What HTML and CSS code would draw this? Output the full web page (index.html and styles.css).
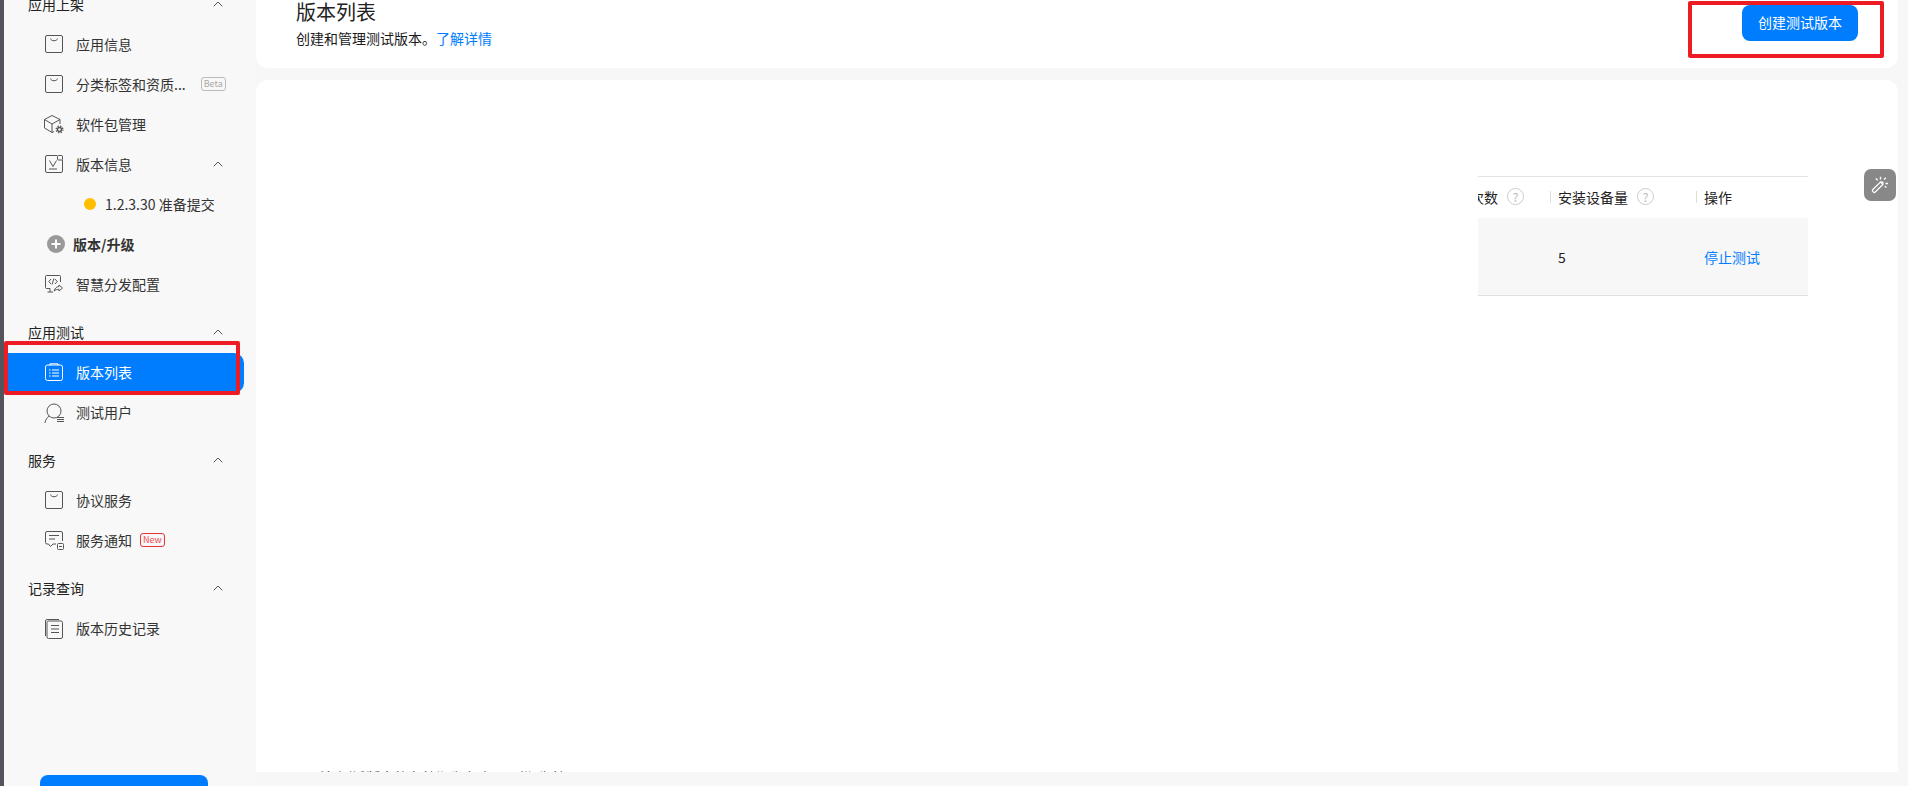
FILE: index.html
```html
<!DOCTYPE html>
<html>

<head>
    <title>版本列表</title>
    <meta charset="utf-8" />
    <link rel="stylesheet" href="styles.css">
</head>

<body>
    <svg class="defs" width="0" height="0">
        <symbol id="ic-box" viewBox="0 0 18 18">
            <rect x="0.5" y="0.5" width="17" height="17" rx="1.500" fill="none" stroke="#555" />
            <path d="M5.500 3.500c.5 3 6.500 3 7 0" fill="none" stroke="#555" />
        </symbol>
        <symbol id="ic-up" viewBox="0 0 10 6">
            <path d="M.7 5.300 5 1l4.300 4.300" fill="none" stroke="#555" />
        </symbol>
    </svg>
    <div class="page">
        <div class="edge"></div>
        <div class="side">
            <div class="group-title first">应用上架<svg class="up"><use href="#ic-up" /></svg></div>
            <div class="item">
                <svg class="icon"><use href="#ic-box" /></svg>
                <span>应用信息</span>
            </div>
            <div class="item">
                <svg class="icon"><use href="#ic-box" /></svg>
                <span>分类标签和资质...</span>
                <span class="tag tag-beta">Beta</span>
            </div>
            <div class="item">
                <svg class="icon" viewBox="0 0 18 18" fill="none" stroke="#555">
                    <path d="M7 .5 15 4.500V9M7 .5-.5 4.500V13L7 17.500l2-1M-.5 4.500 7 9l8-4.500M7 9v8.500" />
                    <circle cx="14.500" cy="14.500" r="2" stroke-width="1.400" />
                    <circle cx="14.500" cy="14.500" r="3.400" stroke-dasharray="1.400 1.300" stroke-width="1.200" />
                </svg>
                <span>软件包管理</span>
            </div>
            <div class="item">
                <svg class="icon" viewBox="0 0 18 18" fill="none" stroke="#555">
                    <path d="M12 .5H2A1.500 1.500 0 0 0 .5 2v14A1.500 1.500 0 0 0 2 17.500h14a1.500 1.500 0 0 0 1.500-1.500V5" />
                    <rect x="12.500" y=".5" width="5" height="4.500" rx=".8" />
                    <path d="M4.500 5.500 8 11.500l3.500-6M4 14h8" />
                </svg>
                <span>版本信息</span>
                <svg class="up"><use href="#ic-up" /></svg>
            </div>
            <div class="item sub-item">
                <i class="dot"></i>
                <span>1.2.3.30 准备提交</span>
            </div>
            <div class="item add-item">
                <svg class="plus" viewBox="0 0 18 18">
                    <circle cx="9" cy="9" r="9" fill="#999" />
                    <path d="M9 4.500v9M4.500 9h9" stroke="#fff" stroke-width="2" />
                </svg>
                <span>版本/升级</span>
            </div>
            <div class="item">
                <svg class="icon" viewBox="0 0 18 18" fill="none" stroke="#555">
                    <path d="M5 13.500H1.500a1 1 0 0 1-1-1V1.500a1 1 0 0 1 1-1h13a1 1 0 0 1 1 1V7" />
                    <path d="M6 4 3.800 6.500 6 9M10 4l2.200 2.500L10 9M8.800 3.500 7.200 9.500M5 13.500V17M2.500 17H8M9 16c1-3 3-4.500 5-4.500V10l3.500 3-3.500 3v-1.700c-2 0-3.500.5-5 1.700z" />
                </svg>
                <span>智慧分发配置</span>
            </div>

            <div class="group-title">应用测试<svg class="up"><use href="#ic-up" /></svg></div>
            <div class="item active">
                <svg class="icon" viewBox="0 0 18 18" fill="none" stroke="#fff">
                    <rect x=".5" y="2" width="17" height="15.500" rx="2" />
                    <path d="M5 2.500V.8h8v1.700M4 7h1.500M7 7h7M4 10h1.500M7 10h7M4 13h1.500M7 13h7" />
                </svg>
                <span>版本列表</span>
            </div>
            <div class="item">
                <svg class="icon" viewBox="0 0 18 18" fill="none" stroke="#555">
                    <circle cx="9" cy="8" r="7" />
                    <path d="M0 20c.4-3 2-5.500 4-6.800M12 14.500h7M12 16.500h7M12 18.500h7" />
                </svg>
                <span>测试用户</span>
            </div>

            <div class="group-title">服务<svg class="up"><use href="#ic-up" /></svg></div>
            <div class="item">
                <svg class="icon"><use href="#ic-box" /></svg>
                <span>协议服务</span>
            </div>
            <div class="item">
                <svg class="icon" viewBox="0 0 18 18" fill="none" stroke="#555">
                    <path d="M11 13H8l-2.500 2.500L3.500 13H2a1.500 1.500 0 0 1-1.500-1.500V2A1.500 1.500 0 0 1 2 .5h14A1.500 1.500 0 0 1 17.500 2v8" />
                    <path d="M4 4.500h10M4 8h6" />
                    <rect x="12.500" y="12.500" width="6" height="6" rx="1" />
                    <path d="M14 15.500h3" />
                </svg>
                <span>服务通知</span>
                <span class="tag tag-new">New</span>
            </div>

            <div class="group-title">记录查询<svg class="up"><use href="#ic-up" /></svg></div>
            <div class="item">
                <svg class="icon" viewBox="0 0 18 18" fill="none" stroke="#555">
                    <path d="M14 .5H2A1.500 1.500 0 0 0 .5 2v15" />
                    <rect x="2" y="2" width="15.500" height="17.500" rx="1.500" />
                    <path d="M6 6.500h8M6 10h8M6 13.500h8" />
                </svg>
                <span>版本历史记录</span>
            </div>
            <div class="side-btn"></div>
        </div>

        <div class="main">
            <div class="head-card">
                <div>
                    <div class="title">版本列表</div>
                    <div class="desc">创建和管理测试版本。<a class="link">了解详情</a></div>
                </div>
                <div class="primary-btn">创建测试版本</div>
            </div>
            <div class="body-card">
                <div class="table">
                    <div class="tr th">
                        <div class="col col-a"><span class="cut">次数</span><i class="help">?</i></div>
                        <div class="col col-b"><span>安装设备量</span><i class="help">?</i></div>
                        <div class="col col-c"><span>操作</span></div>
                    </div>
                    <div class="tr td">
                        <div class="col col-a"></div>
                        <div class="col col-b">5</div>
                        <div class="col col-c"><a class="link">停止测试</a></div>
                    </div>
                </div>
                <div class="note">注:测试版本的有效期为九十天,到期失效</div>
            </div>
        </div>

        <div class="magic">
            <svg viewBox="0 0 18 18" width="18" height="18" fill="none" stroke="#fff">
                <path d="M1.600 13.800 9.500 6l2.400 2.400-7.900 7.800a1 1 0 0 1-1.400 0l-1-1a1 1 0 0 1 0-1.400z" stroke-width="1.200" />
                <path d="M8.500 5.500h4v3z" fill="#fff" stroke="none" />
                <path d="M9.500.8v2.600M14.800 1.800l-1.800 1.800M17 7.500h-2.600M15.500 11.500l-1.800-1.300M4.800 2.500l1.800 1.800" stroke-width="1.400" />
            </svg>
        </div>
        <div class="mark mark-nav"></div>
        <div class="mark mark-btn"></div>
    </div>
</body>

</html>
```

FILE: styles.css
```css
html,
body {
    width: 100%;
    height: 100%;
    margin: 0;
    overflow: hidden;
}

body {
    font-family: "Noto Sans CJK SC", "Noto Sans", sans-serif;
    font-size: 14px;
    color: #222;
    background-color: #f7f7f7;
}

.defs {
    position: absolute;
}

.page {
    position: relative;
    display: flex;
    height: 786px;
    overflow: hidden;
}

.edge {
    flex: none;
    width: 4px;
    background-color: #54545c;
}

/* left menu */
.side {
    flex: none;
    width: 252px;
    height: 801px;
    margin-top: -15px;
    background-color: #f8f8f8;
}

.group-title {
    display: flex;
    align-items: center;
    justify-content: space-between;
    height: 40px;
    margin-top: 8px;
    padding: 0 33px 2px 24px;
    box-sizing: border-box;
}

.group-title.first {
    margin-top: 0;
}

.up {
    flex: none;
    width: 10px;
    height: 6px;
}

.item {
    display: flex;
    align-items: center;
    width: 240px;
    height: 40px;
    padding: 0 0 2px 41px;
    box-sizing: border-box;
    color: #333;
    white-space: nowrap;
}

.item > .up {
    margin-left: 81px;
}

.icon {
    flex: none;
    width: 18px;
    height: 18px;
    margin-right: 13px;
    overflow: visible;
}

.tag {
    flex: none;
    height: 12px;
    padding: 0 2px;
    line-height: 12px;
    font-size: 9px;
    border: 1px solid;
    border-radius: 3px;
}

.tag-beta {
    margin-left: 15px;
    color: #aaa;
    border-color: #bbb;
}

.tag-new {
    margin-left: 8px;
    color: #f0484f;
    border-color: #e8333b;
}

.sub-item {
    padding-left: 80px;
}

.dot {
    flex: none;
    width: 12px;
    height: 12px;
    margin-right: 9px;
    border-radius: 50%;
    background-color: #ffbf00;
}

.add-item {
    padding-left: 43px;
    font-weight: 700;
}

.plus {
    flex: none;
    width: 18px;
    height: 18px;
    margin-right: 8px;
}

.active {
    color: #fff;
    background-color: #007dff;
    border-radius: 0 10px 10px 0;
}

.side-btn {
    width: 168px;
    height: 40px;
    margin: 126px 0 0 36px;
    background-color: #007dff;
    border-radius: 8px;
}

/* right side */
.main {
    flex: 1;
    display: flex;
    flex-direction: column;
    gap: 12px;
    padding-right: 10px;
    min-width: 0;
}

.head-card {
    flex: none;
    display: flex;
    justify-content: space-between;
    height: 68px;
    padding: 0 40px;
    box-sizing: border-box;
    background-color: #fff;
    border-radius: 0 0 12px 12px;
}

.title {
    height: 24px;
    line-height: 24px;
    font-size: 20px;
}

.desc {
    margin-top: 4px;
    line-height: 20px;
    color: #191919;
}

.link {
    color: #007dff;
}

.primary-btn {
    width: 116px;
    height: 36px;
    margin-top: 5px;
    line-height: 35px;
    text-align: center;
    color: #fff;
    background-color: #007dff;
    border-radius: 8px;
}

.body-card {
    flex: none;
    height: 692px;
    overflow: hidden;
    background-color: #fff;
    border-radius: 12px 12px 0 0;
}

.table {
    width: 330px;
    margin: 96px 90px 0 auto;
    overflow: hidden;
    border-top: 1px solid #e3e3e3;
}

.tr {
    display: flex;
}

.th {
    height: 41px;
    padding-bottom: 2px;
    box-sizing: border-box;
    align-items: center;
}

.td {
    height: 77px;
    align-items: center;
    background-color: #f7f7f7;
    border-bottom: 1px solid #e0e0e0;
}

.col {
    flex: none;
    display: flex;
    align-items: center;
    box-sizing: border-box;
    padding-left: 8px;
}

.col-a {
    width: 72px;
}

.col-b {
    width: 146px;
}

.col-c {
    width: 112px;
}

.th .col-b,
.th .col-c {
    height: 12px;
    border-left: 1px solid #ddd;
    padding-left: 7px;
}

.cut {
    margin-left: -16px;
    white-space: nowrap;
}

.help {
    flex: none;
    width: 15px;
    height: 15px;
    margin-left: 9px;
    line-height: 15px;
    text-align: center;
    font-size: 12px;
    font-style: normal;
    color: #bbb;
    border: 1px solid #ccc;
    border-radius: 50%;
}

.note {
    margin: 471px 0 0 64px;
    line-height: 20px;
    white-space: nowrap;
    color: #333;
}

/* things lying on top */
.magic {
    position: absolute;
    top: 169px;
    left: 1864px;
    display: flex;
    align-items: center;
    justify-content: center;
    width: 32px;
    height: 32px;
    background-color: #888;
    border-radius: 7px;
}

.mark {
    position: absolute;
    box-sizing: border-box;
    border: 4px solid #ed1c24;
    border-radius: 2px;
}

.mark-nav {
    top: 341px;
    left: 4px;
    width: 236px;
    height: 54px;
}

.mark-btn {
    top: 1px;
    left: 1688px;
    width: 196px;
    height: 57px;
}
```
